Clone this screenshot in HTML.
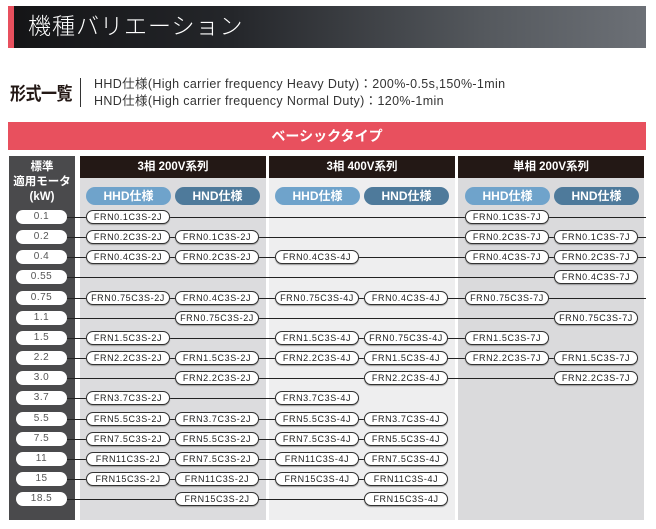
<!DOCTYPE html>
<html><head><meta charset="utf-8"><style>
*{margin:0;padding:0;box-sizing:border-box}
body{width:656px;height:529px;background:#fff;position:relative;overflow:hidden;font-family:"Liberation Sans","Noto Sans CJK JP",sans-serif}
div{position:absolute}
.hd{left:8px;top:6px;width:638px;height:42px;background:linear-gradient(90deg,#141416 0%,#24262a 35%,#55595e 75%,#6c7076 100%)}
.acc{left:8px;top:6px;width:6px;height:42px;background:#e8505e}
.ttl{left:28px;top:9px;color:#fff;font-size:23px;font-weight:300;letter-spacing:1px;line-height:34px}
.k{left:10px;top:80px;font-size:16px;font-weight:bold;color:#231815;letter-spacing:-.5px;transform:scaleY(1.15)}
.vl{left:80px;top:78px;width:1px;height:29px;background:#333}
.t1{left:94px;top:76px;font-size:12.5px;color:#333;line-height:17px;white-space:nowrap;letter-spacing:.35px}
.red{left:8px;top:122px;width:638px;height:28px;background:#e8505e;color:#fff;font-weight:bold;font-size:14px;text-align:center;line-height:28px}
.lc{left:9px;top:156px;width:66px;height:364px;background:#4a4a4c}
.lt{left:9px;top:160px;width:66px;color:#fff;font-size:11.5px;font-weight:bold;text-align:center;line-height:15px}
.cb{top:156px;height:364px}
.sh{top:156px;height:22px;background:#231815;color:#fff;font-size:11.5px;font-weight:bold;text-align:center;line-height:22px}
.sp{top:187px;width:85px;height:18px;border-radius:9px;color:#fff;font-size:12px;font-weight:bold;text-align:center;line-height:18px}
.a{background:#6fa3cb}.b{background:#4e7a9b}
.w{left:16px;width:51px;height:14px;background:#fff;border-radius:7px;color:#555;font-size:10px;text-align:center;line-height:14px;letter-spacing:.5px}
.ln{left:67px;height:1px;background:#222}
.p{width:84px;height:14px;background:#fff;border:1px solid #333;border-radius:7px;box-shadow:0 1px 1px #999;font-size:9px;text-align:center;line-height:12px;color:#222;letter-spacing:.6px;white-space:nowrap;overflow:hidden}
.c1{left:86px}.c2{left:175px}.c3{left:275px}.c4{left:364px}.c5{left:465px}.c6{left:554px}
</style></head><body>
<div class="hd"></div><div class="acc"></div>
<div class="ttl">機種バリエーション</div>
<div class="k">形式一覧</div><div class="vl"></div>
<div class="t1">HHD仕様(High carrier frequency Heavy Duty)：200%-0.5s,150%-1min<br>HND仕様(High carrier frequency Normal Duty)：120%-1min</div>
<div class="red">ベーシックタイプ</div>
<div class="lc"></div>
<div class="lt">標準<br>適用モータ<br>(kW)</div>
<div class="cb" style="left:80px;width:186px;background:#dcdcde"></div>
<div class="cb" style="left:269px;width:186px;background:#eeeeef"></div>
<div class="cb" style="left:458px;width:186px;background:#dadadc"></div>
<div class="sh" style="left:80px;width:186px">3相 200V系列</div>
<div class="sh" style="left:269px;width:186px">3相 400V系列</div>
<div class="sh" style="left:458px;width:186px">単相 200V系列</div>
<div class="sp a" style="left:86px">HHD仕様</div><div class="sp b" style="left:175px">HND仕様</div>
<div class="sp a" style="left:275px">HHD仕様</div><div class="sp b" style="left:364px">HND仕様</div>
<div class="sp a" style="left:465px">HHD仕様</div><div class="sp b" style="left:554px">HND仕様</div>

<div class="ln" style="top:217px;width:579px"></div>
<div class="ln" style="top:237px;width:579px"></div>
<div class="ln" style="top:257px;width:579px"></div>
<div class="ln" style="top:277px;width:571px"></div>
<div class="ln" style="top:298px;width:579px"></div>
<div class="ln" style="top:318px;width:571px"></div>
<div class="ln" style="top:338px;width:481px"></div>
<div class="ln" style="top:358px;width:571px"></div>
<div class="ln" style="top:378px;width:571px"></div>
<div class="ln" style="top:398px;width:292px"></div>
<div class="ln" style="top:419px;width:381px"></div>
<div class="ln" style="top:439px;width:381px"></div>
<div class="ln" style="top:459px;width:381px"></div>
<div class="ln" style="top:479px;width:381px"></div>
<div class="ln" style="top:499px;width:381px"></div>

<div class="w" style="top:210px">0.1</div>
<div class="w" style="top:230px">0.2</div>
<div class="w" style="top:250px">0.4</div>
<div class="w" style="top:270px">0.55</div>
<div class="w" style="top:291px">0.75</div>
<div class="w" style="top:311px">1.1</div>
<div class="w" style="top:331px">1.5</div>
<div class="w" style="top:351px">2.2</div>
<div class="w" style="top:371px">3.0</div>
<div class="w" style="top:391px">3.7</div>
<div class="w" style="top:412px">5.5</div>
<div class="w" style="top:432px">7.5</div>
<div class="w" style="top:452px">11</div>
<div class="w" style="top:472px">15</div>
<div class="w" style="top:492px">18.5</div>

<div class="p c1" style="top:210px">FRN0.1C3S-2J</div>
<div class="p c5" style="top:210px">FRN0.1C3S-7J</div>

<div class="p c1" style="top:230px">FRN0.2C3S-2J</div>
<div class="p c2" style="top:230px">FRN0.1C3S-2J</div>
<div class="p c5" style="top:230px">FRN0.2C3S-7J</div>
<div class="p c6" style="top:230px">FRN0.1C3S-7J</div>

<div class="p c1" style="top:250px">FRN0.4C3S-2J</div>
<div class="p c2" style="top:250px">FRN0.2C3S-2J</div>
<div class="p c3" style="top:250px">FRN0.4C3S-4J</div>
<div class="p c5" style="top:250px">FRN0.4C3S-7J</div>
<div class="p c6" style="top:250px">FRN0.2C3S-7J</div>

<div class="p c6" style="top:270px">FRN0.4C3S-7J</div>

<div class="p c1" style="top:291px">FRN0.75C3S-2J</div>
<div class="p c2" style="top:291px">FRN0.4C3S-2J</div>
<div class="p c3" style="top:291px">FRN0.75C3S-4J</div>
<div class="p c4" style="top:291px">FRN0.4C3S-4J</div>
<div class="p c5" style="top:291px">FRN0.75C3S-7J</div>

<div class="p c2" style="top:311px">FRN0.75C3S-2J</div>
<div class="p c6" style="top:311px">FRN0.75C3S-7J</div>

<div class="p c1" style="top:331px">FRN1.5C3S-2J</div>
<div class="p c3" style="top:331px">FRN1.5C3S-4J</div>
<div class="p c4" style="top:331px">FRN0.75C3S-4J</div>
<div class="p c5" style="top:331px">FRN1.5C3S-7J</div>

<div class="p c1" style="top:351px">FRN2.2C3S-2J</div>
<div class="p c2" style="top:351px">FRN1.5C3S-2J</div>
<div class="p c3" style="top:351px">FRN2.2C3S-4J</div>
<div class="p c4" style="top:351px">FRN1.5C3S-4J</div>
<div class="p c5" style="top:351px">FRN2.2C3S-7J</div>
<div class="p c6" style="top:351px">FRN1.5C3S-7J</div>

<div class="p c2" style="top:371px">FRN2.2C3S-2J</div>
<div class="p c4" style="top:371px">FRN2.2C3S-4J</div>
<div class="p c6" style="top:371px">FRN2.2C3S-7J</div>

<div class="p c1" style="top:391px">FRN3.7C3S-2J</div>
<div class="p c3" style="top:391px">FRN3.7C3S-4J</div>

<div class="p c1" style="top:412px">FRN5.5C3S-2J</div>
<div class="p c2" style="top:412px">FRN3.7C3S-2J</div>
<div class="p c3" style="top:412px">FRN5.5C3S-4J</div>
<div class="p c4" style="top:412px">FRN3.7C3S-4J</div>

<div class="p c1" style="top:432px">FRN7.5C3S-2J</div>
<div class="p c2" style="top:432px">FRN5.5C3S-2J</div>
<div class="p c3" style="top:432px">FRN7.5C3S-4J</div>
<div class="p c4" style="top:432px">FRN5.5C3S-4J</div>

<div class="p c1" style="top:452px">FRN11C3S-2J</div>
<div class="p c2" style="top:452px">FRN7.5C3S-2J</div>
<div class="p c3" style="top:452px">FRN11C3S-4J</div>
<div class="p c4" style="top:452px">FRN7.5C3S-4J</div>

<div class="p c1" style="top:472px">FRN15C3S-2J</div>
<div class="p c2" style="top:472px">FRN11C3S-2J</div>
<div class="p c3" style="top:472px">FRN15C3S-4J</div>
<div class="p c4" style="top:472px">FRN11C3S-4J</div>

<div class="p c2" style="top:492px">FRN15C3S-2J</div>
<div class="p c4" style="top:492px">FRN15C3S-4J</div>
</body></html>
